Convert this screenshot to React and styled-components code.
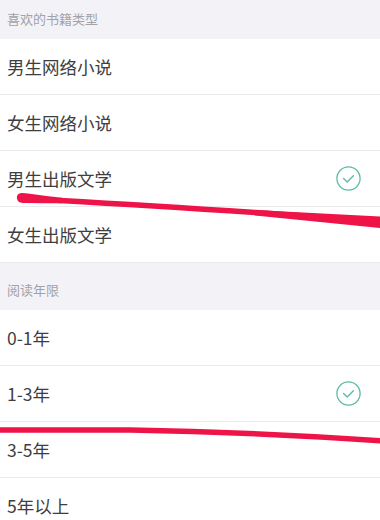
import React from "react";
import styled, { createGlobalStyle } from "styled-components";

const GlobalStyle = createGlobalStyle`
  html, body {
    margin: 0;
    padding: 0;
    background: #f3f2f7;
  }
  body {
    font-family: "Noto Sans CJK SC", "Noto Sans", sans-serif;
  }
`;

const Page = styled.div`
  position: relative;
  width: 380px;
  height: 520px;
  overflow: hidden;
  background: #f3f2f7;
`;

const SectionTitle = styled.div`
  height: ${(p) => p.$height}px;
  box-sizing: border-box;
  display: flex;
  align-items: flex-end;
  padding: 0 0 11px 7px;
  font-size: 13px;
  line-height: 18px;
  color: #a2a2a8;
`;

const List = styled.div`
  background: #fff;
`;

const Row = styled.div`
  height: 56px;
  box-sizing: border-box;
  display: flex;
  align-items: center;
  justify-content: space-between;
  padding: 0 19px 0 7px;
  border-bottom: 1px solid #e9e9ee;
  font-size: 17.5px;
  color: #3e3e3e;
`;

const Label = styled.span`
  line-height: 24px;
`;

const Marks = styled.svg`
  position: absolute;
  left: 0;
  top: 0;
  pointer-events: none;
`;

const Check = () => (
  <svg width="25" height="25" viewBox="0 0 25 25">
    <circle cx="12.5" cy="12.5" r="11.6" fill="none" stroke="#5dbba8" strokeWidth="1.3" />
    <path d="M7.6 12.6 L11.2 16 L17.4 9.8" fill="none" stroke="#5dbba8" strokeWidth="1.4" strokeLinecap="round" strokeLinejoin="round" />
  </svg>
);

const sections = [
  {
    title: "喜欢的书籍类型",
    height: 39,
    items: [
      { label: "男生网络小说" },
      { label: "女生网络小说" },
      { label: "男生出版文学", checked: true },
      { label: "女生出版文学" },
    ],
  },
  {
    title: "阅读年限",
    height: 47,
    items: [
      { label: "0-1年" },
      { label: "1-3年", checked: true },
      { label: "3-5年" },
      { label: "5年以上" },
    ],
  },
];

export default function App() {
  return (
    <Page>
      <GlobalStyle />
      {sections.map((s) => (
        <React.Fragment key={s.title}>
          <SectionTitle $height={s.height}>{s.title}</SectionTitle>
          <List>
            {s.items.map((it) => (
              <Row key={it.label}>
                <Label>{it.label}</Label>
                {it.checked && <Check />}
              </Row>
            ))}
          </List>
        </React.Fragment>
      ))}
      <Marks width="380" height="520" viewBox="0 0 380 520">
        {/* first stroke: heavy start, thin middle, widening off the right edge */}
        <path
          d="M17 197.5 C17 192.5 22 192.5 28 193.5 Q 45 196 62 197.7 L62 203.2 Q 45 203.2 28 203 C21 203.5 17 202.5 17 197.5 Z"
          fill="#ee1448"
        />
        <path
          d="M60 200.5 Q 150 205.5 255 212.5 T 380 222"
          fill="none"
          stroke="#ee1448"
          strokeWidth="5.5"
          strokeLinecap="round"
        />
        <path d="M255 210 L380 216.5 L380 228 L255 215.5 Z" fill="#ee1448" />
        {/* second stroke */}
        <path
          d="M-5 430 L130 430 Q 255 432 385 441"
          fill="none"
          stroke="#ee1448"
          strokeWidth="5.5"
          strokeLinecap="round"
        />
      </Marks>
    </Page>
  );
}
